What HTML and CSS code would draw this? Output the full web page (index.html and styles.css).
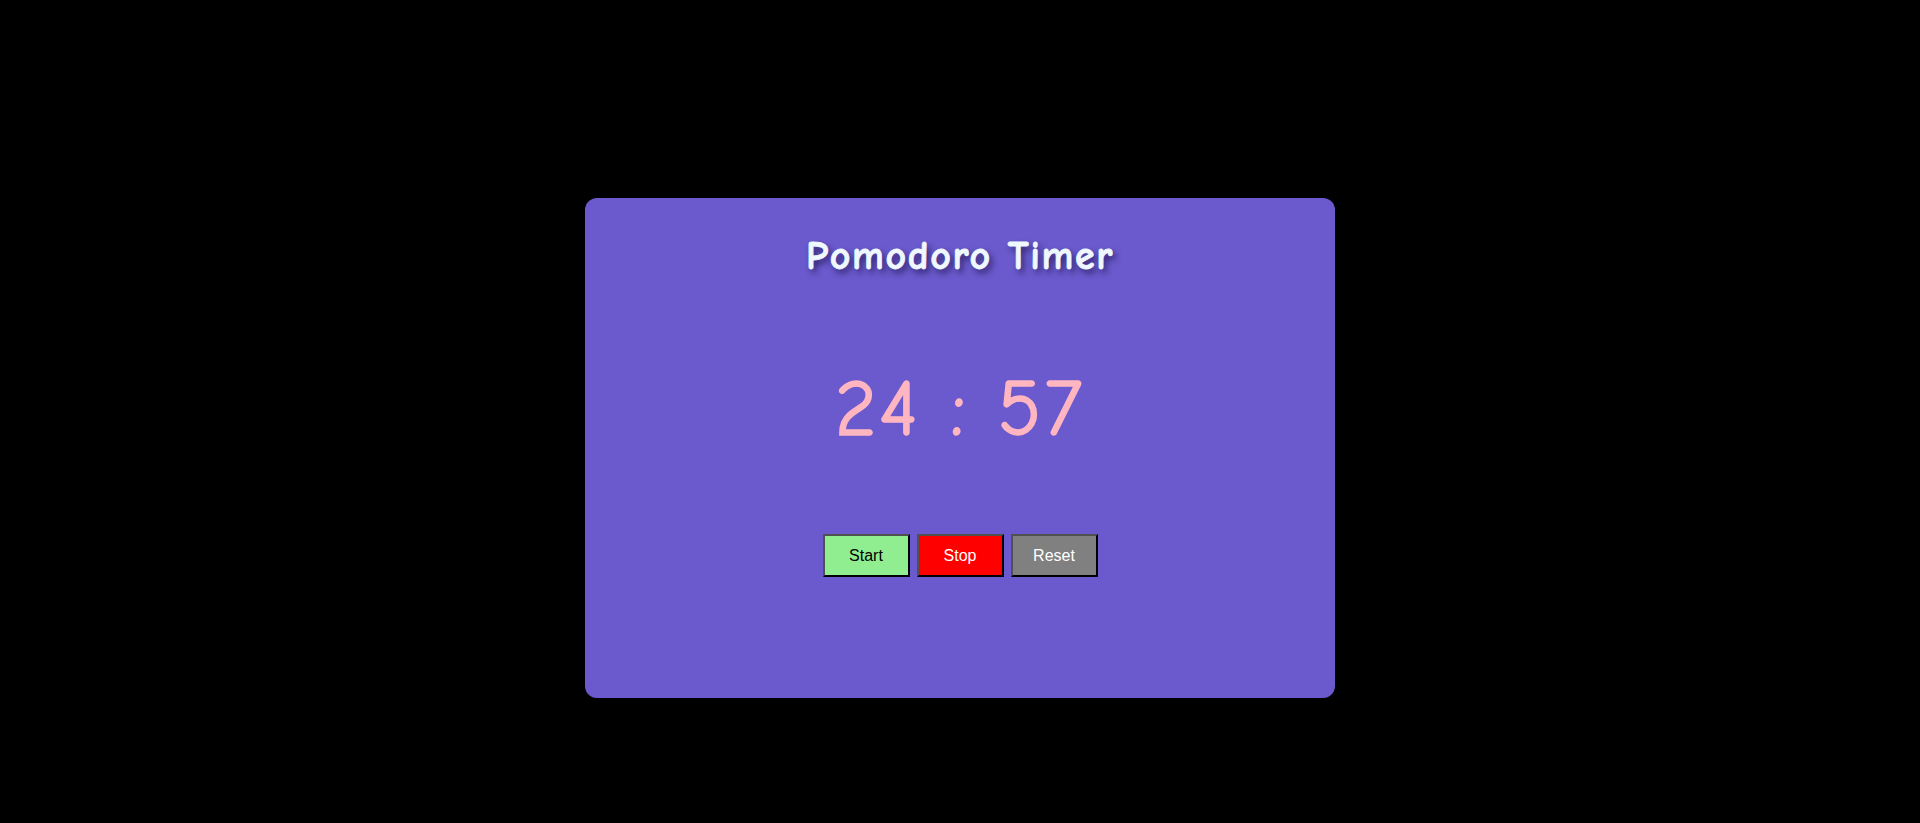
FILE: index.html
```html
<!DOCTYPE html>
<html lang="en">
<head>
<meta charset="utf-8">
<title>Pomodoro Timer</title>
<link rel="stylesheet" href="styles.css">
</head>
<body>
  <main class="card">
    <h1 class="title">Pomodoro Timer</h1>
    <div class="timer">24 : 57</div>
    <div class="controls">
      <button class="btn btn-start">Start</button>
      <button class="btn btn-stop">Stop</button>
      <button class="btn btn-reset">Reset</button>
    </div>
  </main>
</body>
</html>
```
FILE: styles.css
```css
html, body {
  margin: 0;
  padding: 0;
  background: #000;
  height: 100%;
}

body {
  display: flex;
  justify-content: center;
  align-items: flex-start;
  padding-top: 198px;
  box-sizing: border-box;
}

.card {
  width: 750px;
  height: 500px;
  box-sizing: border-box;
  background: #6a5acd;
  border-radius: 12px;
  display: flex;
  flex-direction: column;
  align-items: center;
  padding-top: 34px;
}

.title {
  margin: 0;
  font-family: "Comic Sans MS", "Comic Neue", "Lato", sans-serif;
  font-weight: 900;
  font-size: 40px;
  line-height: 48px;
  letter-spacing: 1.6px;
  color: #f0f8ff;
  -webkit-text-stroke: 0.8px #f0f8ff;
  text-shadow: 3px 4px 6px rgba(20, 10, 60, 0.75);
}

.timer {
  margin-top: 89px;
  font-family: "Comic Sans MS", "Comic Neue", "Lato", sans-serif;
  font-size: 80px;
  line-height: 80px;
  color: #ffb6c1;
  letter-spacing: 3px;
  -webkit-text-stroke: 1.5px #ffb6c1;
}

.controls {
  margin-top: 85px;
  display: flex;
  gap: 7px;
}

.btn {
  width: 87px;
  height: 43px;
  box-sizing: border-box;
  border: 2px solid;
  border-color: #505050 #000 #000 #505050;
  font-family: "Liberation Sans", Arial, sans-serif;
  font-size: 16px;
  padding: 0;
  cursor: pointer;
}

.btn-start {
  background: #90ee90;
  color: #000;
}

.btn-stop {
  background: #ff0000;
  color: #fff;
}

.btn-reset {
  background: #808080;
  color: #fff;
}
```
